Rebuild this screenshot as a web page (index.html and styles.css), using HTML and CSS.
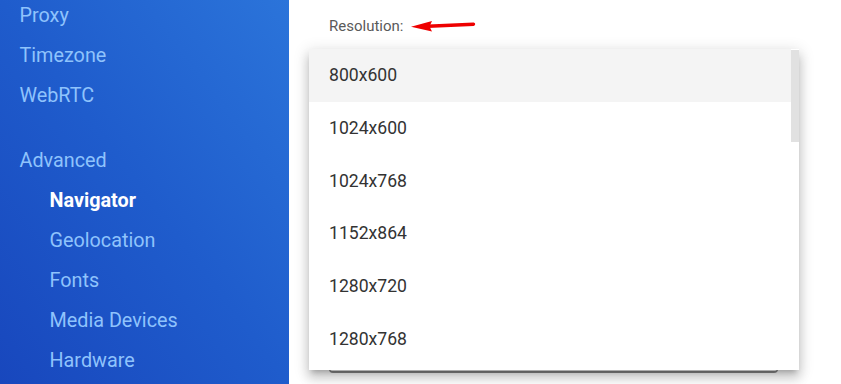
FILE: index.html
```html
<!DOCTYPE html>
<html>
<head>
<meta charset="utf-8">
<link rel="stylesheet" href="styles.css">
</head>
<body>
<div class="app">
  <nav class="sidebar">
    <ul class="nav">
      <li class="nav-item">Proxy</li>
      <li class="nav-item">Timezone</li>
      <li class="nav-item">WebRTC</li>
    </ul>
    <ul class="nav group">
      <li class="nav-item">Advanced</li>
      <li class="nav-item sub active">Navigator</li>
      <li class="nav-item sub">Geolocation</li>
      <li class="nav-item sub">Fonts</li>
      <li class="nav-item sub">Media Devices</li>
      <li class="nav-item sub">Hardware</li>
    </ul>
  </nav>
  <main class="main">
    <div class="label-row">
      <span class="label">Resolution:</span>
      <svg class="arrow" width="66" height="12" viewBox="0 0 66 12">
        <line x1="17" y1="6.3" x2="62.5" y2="4.2" stroke="#ee0000" stroke-width="3.4" stroke-linecap="round"/>
        <polygon points="0,6.8 21,1 18.5,6.4 21,11.6" fill="#ee0000"/>
      </svg>
    </div>
    <div class="field">
      <div class="menu">
        <div class="options">
          <div class="option selected">800x600</div>
          <div class="option">1024x600</div>
          <div class="option">1024x768</div>
          <div class="option">1152x864</div>
          <div class="option">1280x720</div>
          <div class="option">1280x768</div>
        </div>
        <div class="scroll-thumb"></div>
      </div>
    </div>
  </main>
</div>
</body>
</html>
```
FILE: styles.css
```css
* { box-sizing: border-box; }
html, body { margin: 0; padding: 0; }
body {
  font-family: Roboto, "Liberation Sans", sans-serif;
  background: #ffffff;
  width: 841px;
  height: 384px;
  overflow: hidden;
}
.app {
  display: flex;
  height: 384px;
  overflow: hidden;
}
.sidebar {
  width: 289px;
  flex: 0 0 289px;
  background: linear-gradient(to top right, #1847bd 0%, #1f5ccc 50%, #2b74da 100%);
  overflow: hidden;
}
.nav {
  list-style: none;
  margin: 0;
  padding: 0;
}
.nav:first-child { margin-top: -4px; }
.nav.group { margin-top: 25px; }
.nav-item {
  height: 40px;
  line-height: 40px;
  padding-left: 19.5px;
  font-size: 19.8px;
  color: #8fc3fc;
  white-space: nowrap;
}
.nav-item.sub { padding-left: 49.5px; }
.nav-item.active {
  color: #ffffff;
  font-weight: 700;
}
.main {
  flex: 1;
  padding: 16px 0 0 40px;
  position: relative;
}
.label-row {
  display: flex;
  align-items: center;
  height: 20px;
}
.label {
  font-size: 15px;
  color: #5a5a5a;
}
.arrow {
  margin-left: 8px;
  margin-top: -1px;
}
.field {
  position: relative;
  margin-top: 16px;
  width: 449px;
  height: 321px;
  border: 1px solid #8a8a8a;
  border-bottom-width: 2px;
  border-radius: 4px;
}
.menu {
  position: absolute;
  top: -4px;
  left: -21px;
  width: 490px;
  height: 321px;
  background: #ffffff;
  overflow: hidden;
  box-shadow: 0 5px 5px -3px rgba(0,0,0,.2), 0 8px 10px 1px rgba(0,0,0,.14), 0 3px 14px 2px rgba(0,0,0,.12);
}
.options {
  margin-right: 8px;
}
.option {
  height: 52.8px;
  line-height: 52.8px;
  padding-left: 20px;
  font-size: 17.6px;
  color: #333333;
}
.option.selected { background: #f4f4f4; }
.scroll-thumb {
  position: absolute;
  top: 1px;
  right: 0;
  width: 8px;
  height: 92px;
  background: #e1e1e1;
}
```
